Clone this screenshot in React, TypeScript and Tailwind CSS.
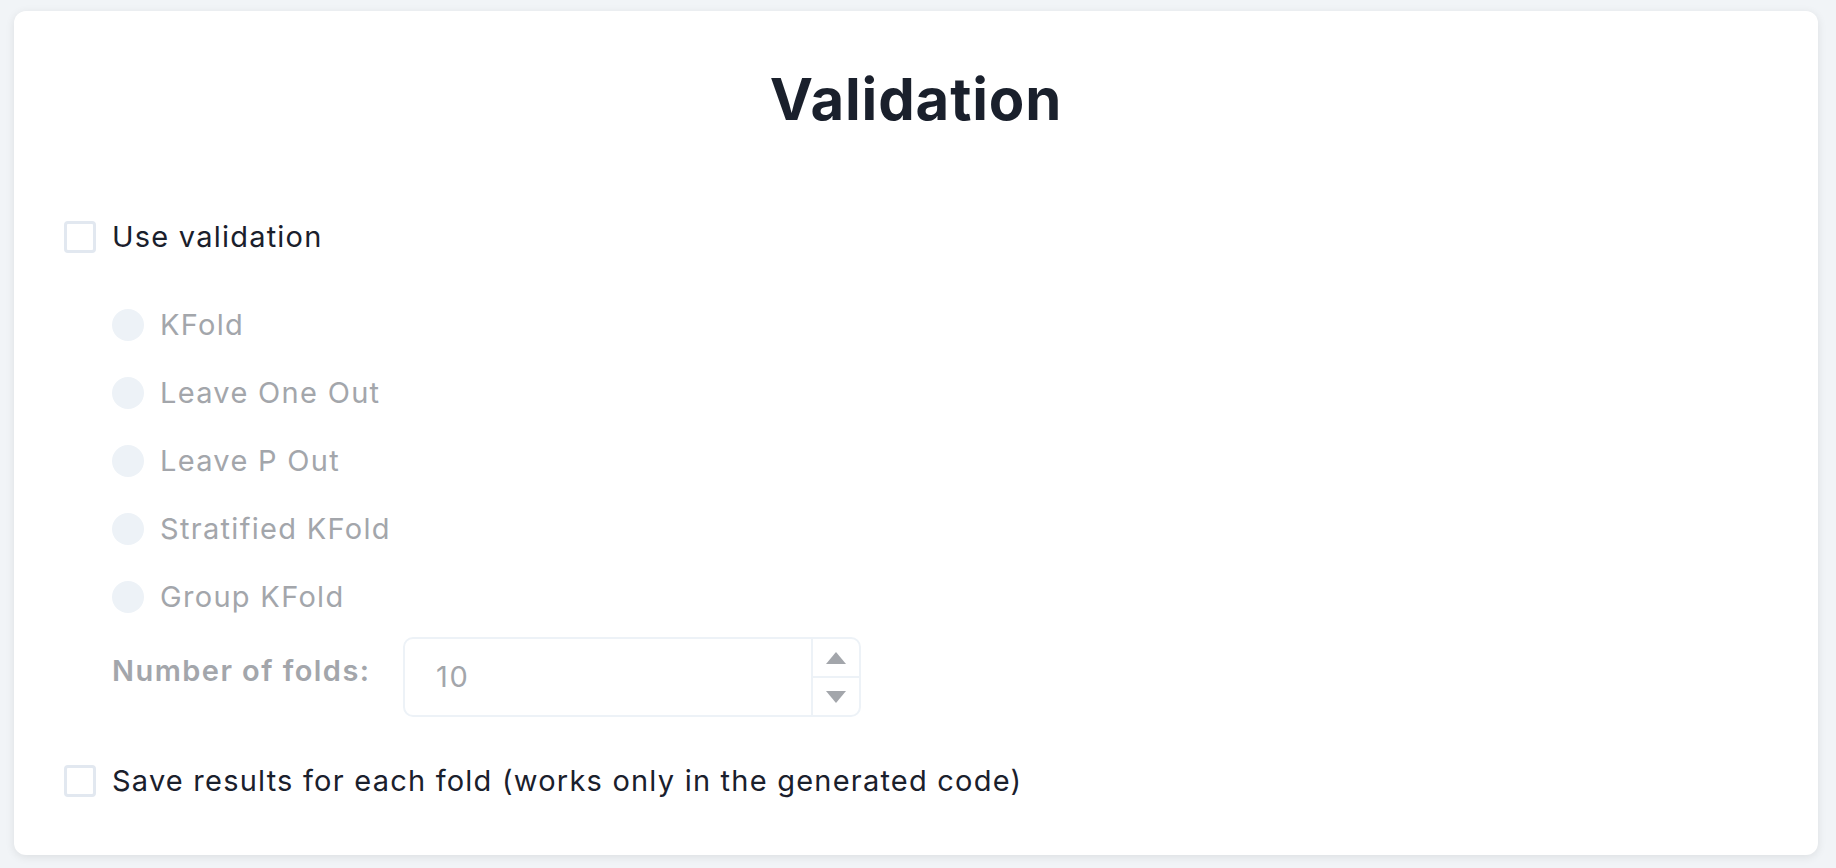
const methods = ["KFold", "Leave One Out", "Leave P Out", "Stratified KFold", "Group KFold"];

function Checkbox({ label }: { label: string }) {
  return (
    <label className="flex h-8 items-center gap-4">
      <span className="h-8 w-8 shrink-0 rounded-[4px] border-[3px] border-[#e2e8f0] bg-white" />
      <span className="text-[29px] leading-8 tracking-[0.042em] text-[#1a202c]">{label}</span>
    </label>
  );
}

function Radio({ label }: { label: string }) {
  return (
    <div className="flex h-8 items-center gap-4">
      <span className="h-8 w-8 shrink-0 rounded-full bg-[#edf2f7]" />
      <span className="text-[29px] leading-8 tracking-[0.045em] text-[#a3a6ab]">{label}</span>
    </div>
  );
}

export default function App() {
  return (
    <div
      className="min-h-screen bg-[#f1f4f7] pl-[14px] pr-[18px] pt-[11px]"
      style={{ fontFamily: "Inter, 'Noto Sans', sans-serif" }}
    >
      <div className="rounded-xl bg-white px-[50px] pb-[58px] pt-[59px] shadow-[0_2px_10px_rgba(0,0,0,0.09)]">
        <h1 className="text-center text-[58px] font-bold leading-none tracking-[0.015em] text-[#1a202c]">
          Validation
        </h1>

        <div className="mt-[93px]">
          <Checkbox label="Use validation" />
        </div>

        <div className="mt-[56px] flex flex-col gap-9 pl-12">
          {methods.map((m) => (
            <Radio key={m} label={m} />
          ))}
        </div>

        <div className="mt-6 flex items-start pl-12">
          <span className="mt-[18px] w-[291px] shrink-0 text-[29px] font-semibold leading-8 tracking-[0.05em] text-[#a3a6ab]">
            Number of folds:
          </span>
          <div className="flex h-20 w-[458px] overflow-hidden rounded-[10px] border-2 border-[#edf2f7]">
            <div className="flex flex-1 items-center pl-[31px] text-[29px] leading-8 tracking-[0.06em] text-[#a3a6ab]">
              10
            </div>
            <div className="flex w-12 flex-col border-l-2 border-[#edf2f7]">
              <div className="flex flex-1 items-center justify-center">
                <svg width="20" height="12" viewBox="0 0 20 12">
                  <path d="M10 0L20 12H0Z" fill="#a3a6ab" />
                </svg>
              </div>
              <div className="flex flex-1 items-center justify-center border-t-2 border-[#edf2f7]">
                <svg width="20" height="12" viewBox="0 0 20 12">
                  <path d="M0 0H20L10 12Z" fill="#a3a6ab" />
                </svg>
              </div>
            </div>
          </div>
        </div>

        <div className="mt-12">
          <Checkbox label="Save results for each fold (works only in the generated code)" />
        </div>
      </div>
    </div>
  );
}
